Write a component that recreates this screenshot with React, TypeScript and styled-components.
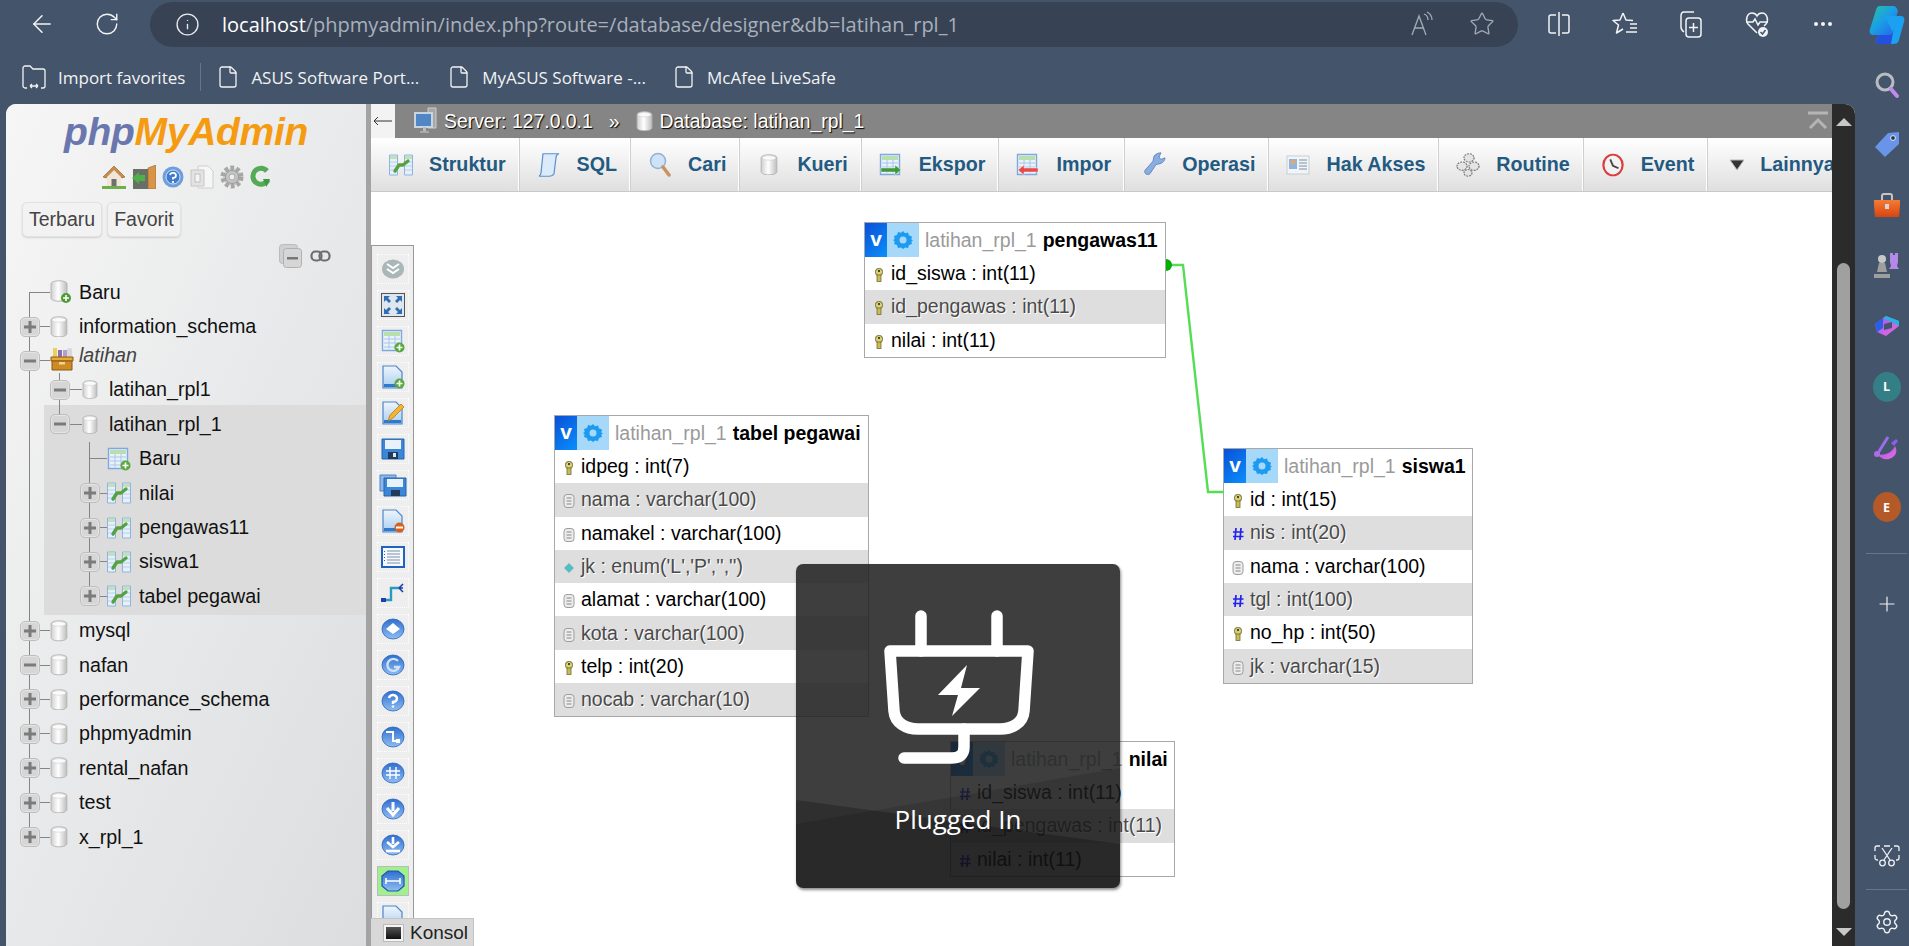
import type { ReactNode } from 'react';
import styled, { createGlobalStyle } from 'styled-components';
import { ArrowLeft, RotateCw, Info, Star, Ellipsis, File, Plus, Settings } from 'lucide-react';

const GlobalStyle = createGlobalStyle`
  html, body { margin: 0; padding: 0; overflow: hidden; }
  body { font-family: "Liberation Sans", Arial, sans-serif; }
  * { box-sizing: border-box; }
`;

const Page = styled.div`
  display: flex;
  width: 1909px;
  height: 946px;
  overflow: hidden;
  background: #44546a;
`;

const Browser = styled.div`
  display: flex;
  flex-direction: column;
  width: 1855px;
`;

/* ---------- browser toolbar ---------- */
const Toolbar = styled.div`
  display: flex;
  align-items: center;
  height: 50px;
  padding: 0 0 2px 26px;
  flex: none;
`;

const NavButton = styled.div<{ $gap?: number }>`
  display: flex;
  align-items: center;
  justify-content: center;
  width: 32px;
  height: 32px;
  flex: none;
  color: #f2f4f6;
  margin-right: ${(p) => p.$gap ?? 0}px;
`;

const AddressBar = styled.div`
  display: flex;
  align-items: center;
  width: 1368px;
  height: 45px;
  margin-right: 25px;
  padding: 0 21px 0 25px;
  border-radius: 23px;
  background: #374355;
  color: #e8eaed;
  flex: none;
`;

const Url = styled.div`
  margin-left: 22px;
  font-family: "Open Sans", sans-serif;
  font-size: 20px;
  color: #a9b0ba;
  white-space: nowrap;
  flex: 1;
`;

const UrlHost = styled.span`
  color: #ffffff;
`;

const PillAction = styled.div`
  display: flex;
  align-items: center;
  justify-content: center;
  width: 30px;
  margin-left: 30px;
  color: #a4abb5;
`;

/* ---------- favourites bar ---------- */
const FavBar = styled.div`
  display: flex;
  align-items: center;
  height: 54px;
  padding: 0 0 0 21px;
  flex: none;
  color: #f1f3f5;
`;

const FavItem = styled.div<{ $gap?: number }>`
  display: flex;
  align-items: center;
  gap: 11px;
  margin-right: ${(p) => p.$gap ?? 0}px;
  font-family: "Open Sans", sans-serif;
  font-size: 17px;
  white-space: nowrap;
`;

const FavDivider = styled.div`
  width: 1px;
  height: 28px;
  margin: 0 15px;
  background: #66758a;
`;

/* ---------- window ---------- */
const Window = styled.div`
  display: flex;
  flex: 1;
  margin-left: 6px;
  min-height: 0;
  overflow: hidden;
  border-radius: 10px 10px 0 0;
  background: #fff;
`;

const Sidebar = styled.div`
  display: flex;
  flex-direction: column;
  width: 360px;
  flex: none;
  padding-top: 8px;
  background: linear-gradient(115deg, #f6f6f6 0%, #e8e9ea 50%, #dcdddf 100%);
`;

const SideDivider = styled.div`
  width: 5px;
  flex: none;
  background: #a3a3a3;
`;

const Logo = styled.div`
  text-align: center;
  font-size: 39px;
  line-height: 40px;
  height: 40px;
  font-weight: 700;
  font-style: italic;
  letter-spacing: -0.3px;
  color: #f59b12;
`;

const LogoPhp = styled.span`
  color: #6a77ae;
`;

const QuickIcons = styled.div`
  display: flex;
  justify-content: center;
  align-items: center;
  gap: 6px;
  height: 24px;
  margin-top: 13px;
`;

const TabButtons = styled.div`
  display: flex;
  gap: 5px;
  height: 35px;
  margin-top: 13px;
  padding-left: 16px;
`;

const RecentButton = styled.div`
  display: flex;
  align-items: center;
  padding: 0 6px;
  border: 1px solid #e2e2e2;
  border-radius: 5px;
  background: #f2f2f2;
  box-shadow: 0 1px 2px #0002;
  font-size: 19.5px;
  color: #444;
`;

const TreeTools = styled.div`
  display: flex;
  align-items: center;
  gap: 8px;
  height: 24px;
  margin-top: 7px;
  padding-left: 273px;
`;

const Tree = styled.div`
  margin-top: 7px;
  padding-left: 9px;
`;

const lineColor = '#858585';
const verticalLine = (v: 'full' | 'top' | 'bottom') =>
  v === 'full'
    ? `linear-gradient(${lineColor},${lineColor}) 13.5px 0 / 1px 100% no-repeat`
    : v === 'top'
      ? `linear-gradient(${lineColor},${lineColor}) 13.5px 0 / 1px 50% no-repeat`
      : `linear-gradient(${lineColor},${lineColor}) 13.5px 100% / 1px 50% no-repeat`;

const Row = styled.div<{ $pull?: boolean }>`
  position: relative;
  z-index: 1;
  display: flex;
  align-items: stretch;
  height: 34.4px;
  margin-top: ${(p) => (p.$pull ? '-5.4px' : '0')};
`;

const Guide = styled.div<{ $on?: boolean }>`
  width: 30px;
  flex: none;
  background: ${(p) => (p.$on ? verticalLine('full') : 'none')};
`;

const Knot = styled.div<{ $v: 'full' | 'top' | 'bottom' }>`
  display: flex;
  align-items: center;
  justify-content: center;
  width: 30px;
  flex: none;
  background: ${(p) => verticalLine(p.$v)},
    linear-gradient(${lineColor},${lineColor}) 13.5px 50% / 17px 1px no-repeat;
`;

const Toggle = styled.div`
  display: flex;
  align-items: center;
  justify-content: center;
  width: 20px;
  height: 20px;
  border: 1px solid #bdbdbd;
  border-radius: 5px;
  background: #d6d6d6;
  box-shadow: inset 0 0 0 1px #e4e4e4;
`;

const IconSlot = styled.div<{ $pad: number }>`
  display: flex;
  align-items: center;
  width: 34px;
  flex: none;
  padding-left: ${(p) => p.$pad}px;
  background: linear-gradient(${lineColor},${lineColor}) 0 50% / ${(p) => p.$pad}px 1px no-repeat;
`;

const Label = styled.div<{ $italic?: boolean }>`
  display: flex;
  align-items: center;
  font-size: 19.7px;
  color: ${(p) => (p.$italic ? '#444' : '#111')};
  font-style: ${(p) => (p.$italic ? 'italic' : 'normal')};
  padding-bottom: ${(p) => (p.$italic ? '10px' : '0')};
  white-space: nowrap;
`;

const HighlightGroup = styled.div`
  position: relative;
  &::before {
    content: '';
    position: absolute;
    top: -2px;
    bottom: -1px;
    left: 29px;
    right: 0;
    background: #dcdcdc;
  }
`;

/* ---------- main column ---------- */
const Main = styled.div`
  display: flex;
  flex-direction: column;
  flex: 1;
  min-width: 0;
`;

const ServerBar = styled.div`
  display: flex;
  align-items: center;
  height: 34px;
  flex: none;
  background: #858585;
  color: #fff;
  font-size: 19.4px;
  text-shadow: 1px 1px 1px #000;
`;

const BackBox = styled.div`
  display: flex;
  align-items: center;
  justify-content: center;
  width: 24px;
  height: 34px;
  margin-right: 19px;
  background: #f3f3f3;
  color: #333;
`;

const Crumb = styled.div<{ $gap?: number }>`
  display: flex;
  align-items: center;
  gap: 7px;
  margin-right: ${(p) => p.$gap ?? 0}px;
  white-space: nowrap;
`;

const BarCollapse = styled.div`
  display: flex;
  margin-left: auto;
  margin-right: 3px;
`;

const Tabs = styled.div`
  display: flex;
  height: 54px;
  flex: none;
  overflow: hidden;
  background: linear-gradient(#ffffff, #dfdfdf);
  border-bottom: 1px solid #c9c9c9;
`;

const Tab = styled.div<{ $tight?: boolean }>`
  display: flex;
  align-items: center;
  gap: ${(p) => (p.$tight ? 11 : 16)}px;
  padding: 0 12px 0 18px;
  flex: none;
  border-right: 1px solid #fff;
  box-shadow: 1px 0 0 #cfcfcf inset;
  font-size: 19.7px;
  font-weight: 700;
  color: #235a81;
  white-space: nowrap;
  &:first-child { box-shadow: none; }
`;

const TabGlyph = styled.div`
  display: flex;
  justify-content: center;
  width: 24px;
`;

const Canvas = styled.div`
  position: relative;
  display: flex;
  flex: 1;
  min-height: 0;
  overflow: hidden;
  background: #fff;
`;

const SideMenu = styled.div`
  display: flex;
  flex-direction: column;
  gap: 6px;
  width: 43px;
  flex: none;
  margin-top: 53px;
  padding: 8px 0 0 5px;
  overflow: hidden;
  background: #eeeeee;
  border-top: 1px solid #999;
  border-right: 1px solid #999;
  border-left: 1px solid #999;
`;

const MenuButton = styled.div<{ $active?: boolean }>`
  display: flex;
  align-items: center;
  justify-content: center;
  width: 32px;
  height: 30px;
  flex: none;
  border: 1px ${(p) => (p.$active ? 'solid #bbb' : 'dotted #fff')};
  background: ${(p) => (p.$active ? '#a0f090' : 'transparent')};
`;

const Konsol = styled.div`
  position: absolute;
  left: 0;
  bottom: 0;
  display: flex;
  align-items: center;
  gap: 7px;
  width: 103px;
  height: 28px;
  padding-left: 13px;
  background: #d8d8d8;
  border-top: 1px solid #c4c4c4;
  border-right: 1px solid #c4c4c4;
  font-size: 19px;
  color: #222;
`;

const KonsolIcon = styled.div`
  width: 19px;
  height: 16px;
  background: linear-gradient(#555, #111);
  border: 2px solid #f4f4f4;
  outline: 1px solid #bbb;
`;

const RelationLines = styled.svg`
  position: absolute;
  inset: 0;
`;

const DbTable = styled.div<{ $x: number; $y: number; $w: number }>`
  position: absolute;
  left: ${(p) => p.$x}px;
  top: ${(p) => p.$y}px;
  width: ${(p) => p.$w}px;
  border: 1px solid #a8a8a8;
  background: #fff;
  font-size: 19.5px;
`;

const DbHeader = styled.div`
  display: flex;
  align-items: center;
  height: 34px;
  white-space: nowrap;
`;

const VBox = styled.div`
  display: flex;
  align-items: center;
  justify-content: center;
  width: 22px;
  height: 34px;
  background: linear-gradient(135deg, #0a50d8, #0b8ffa);
  color: #fff;
  font-weight: 700;
  font-size: 21px;
  padding-bottom: 2px;
`;

const GearBox = styled.div`
  display: flex;
  align-items: center;
  justify-content: center;
  width: 32px;
  height: 34px;
  background: #a6d8fa;
`;

const DbName = styled.div`
  margin-left: 6px;
  color: #9a9a9a;
`;

const DbTitle = styled.span`
  font-weight: 700;
  color: #000;
  margin-left: 6px;
`;

const DbRow = styled.div<{ $alt: boolean }>`
  display: flex;
  align-items: center;
  height: 33.3px;
  padding-left: 7px;
  background: ${(p) => (p.$alt ? '#dedede' : 'transparent')};
  color: ${(p) => (p.$alt ? '#4a4a4a' : '#000')};
  text-shadow: ${(p) => (p.$alt ? '1px 1px 0 #fff' : 'none')};
  white-space: nowrap;
`;

const DbGlyph = styled.div`
  display: flex;
  align-items: center;
  justify-content: center;
  width: 13px;
  margin-right: 6px;
  padding-top: 3px;
  flex: none;
`;

const Toast = styled.div`
  position: absolute;
  left: 425px;
  top: 372px;
  display: flex;
  flex-direction: column;
  align-items: center;
  width: 324px;
  height: 324px;
  overflow: hidden;
  border-radius: 7px;
  background: rgba(30, 30, 30, 0.86);
  box-shadow: 1px 2px 3px rgba(0, 0, 0, 0.45);
  color: #fff;
`;

const ToastShade = styled.svg`
  position: absolute;
  inset: 0;
`;

const PlugIcon = styled.svg`
  position: relative;
  margin-top: 40px;
`;

const ToastText = styled.div`
  position: relative;
  margin-top: 28px;
  font-family: "Open Sans", sans-serif;
  font-size: 26px;
  line-height: 34px;
`;

/* ---------- scrollbar ---------- */
const ScrollTrack = styled.div`
  display: flex;
  flex-direction: column;
  align-items: center;
  width: 23px;
  flex: none;
  padding: 14px 0 10px;
  background: #2b2b2b;
`;

const ScrollArrow = styled.div<{ $down?: boolean }>`
  width: 0;
  height: 0;
  flex: none;
  border-left: 8px solid transparent;
  border-right: 8px solid transparent;
  border-bottom: ${(p) => (p.$down ? '0' : '8px solid #c8c8c8')};
  border-top: ${(p) => (p.$down ? '8px solid #c8c8c8' : '0')};
  margin-top: ${(p) => (p.$down ? 'auto' : '0')};
`;

const ScrollThumb = styled.div`
  width: 13px;
  height: 646px;
  flex: none;
  margin-top: 137px;
  border-radius: 7px;
  background: #a0a0a0;
`;

/* ---------- right rail ---------- */
const Rail = styled.div`
  display: flex;
  flex-direction: column;
  width: 54px;
  flex: none;
  padding: 0 2px 4px 11px;
  color: #eef0f3;
`;

const RailSlot = styled.div<{ $h?: number; $gap?: number }>`
  display: flex;
  align-items: center;
  justify-content: center;
  width: 41px;
  height: ${(p) => p.$h ?? 60.3}px;
  margin-top: ${(p) => p.$gap ?? 0}px;
  flex: none;
`;

const RailDivider = styled.div<{ $gap: number }>`
  width: 41px;
  height: 1px;
  flex: none;
  margin-top: ${(p) => p.$gap}px;
  background: #66758a;
`;

const RailPush = styled.div`
  flex: 1;
`;

const Avatar = styled.div<{ $bg: string }>`
  display: flex;
  align-items: center;
  justify-content: center;
  width: 28px;
  height: 30px;
  border-radius: 50% / 50%;
  background: ${(p) => p.$bg};
  color: #fff;
  font-family: "Open Sans", sans-serif;
  font-weight: 700;
  font-size: 12.5px;
`;

const Defs = styled.svg`
  position: absolute;
  width: 0;
  height: 0;
`;

/* ---------- drawings ---------- */
const SharedDefs = () => (
  <Defs>
    <defs>
      <linearGradient id="cyl" x1="0" x2="1" y1="0" y2="0">
        <stop offset="0" stopColor="#cfcfcf" />
        <stop offset="0.45" stopColor="#ffffff" />
        <stop offset="1" stopColor="#bdbdbd" />
      </linearGradient>
      <linearGradient id="orb" x1="0" x2="0" y1="0" y2="1">
        <stop offset="0" stopColor="#2f6fd0" />
        <stop offset="1" stopColor="#8fbdf2" />
      </linearGradient>
      <linearGradient id="page" x1="0" x2="0" y1="0" y2="1">
        <stop offset="0" stopColor="#eef5fc" />
        <stop offset="1" stopColor="#a9cdf0" />
      </linearGradient>
      <linearGradient id="copilot" x1="0" x2="1" y1="0" y2="1">
        <stop offset="0" stopColor="#28c2a0" />
        <stop offset="0.5" stopColor="#1a9de8" />
        <stop offset="1" stopColor="#2a5ee8" />
      </linearGradient>
      <linearGradient id="toolbox" x1="0" x2="0" y1="0" y2="1">
        <stop offset="0" stopColor="#f47b35" />
        <stop offset="1" stopColor="#d9440f" />
      </linearGradient>
      <linearGradient id="magenta" x1="0" x2="1" y1="0" y2="1">
        <stop offset="0" stopColor="#8f5cf0" />
        <stop offset="1" stopColor="#ee6ae0" />
      </linearGradient>
    </defs>
  </Defs>
);

const DbIcon = ({ size = 18 }: { size?: number }) => (
  <svg width={size} height={size * 1.2} viewBox="0 0 18 22">
    <path d="M1 4c0-2 3.5-3.2 8-3.2S17 2 17 4v14c0 2-3.5 3.2-8 3.2S1 20 1 18z" fill="url(#cyl)" stroke="#b5b5b5" />
    <ellipse cx="9" cy="4" rx="7" ry="2.3" fill="#fbfbfb" stroke="#cfcfcf" strokeWidth="0.6" />
  </svg>
);

const NewDbIcon = () => (
  <svg width="22" height="24" viewBox="0 0 22 24">
    <path d="M1 4c0-2 3.5-3.2 8-3.2S17 2 17 4v14c0 2-3.5 3.2-8 3.2S1 20 1 18z" fill="url(#cyl)" stroke="#b5b5b5" />
    <circle cx="16" cy="18" r="5" fill="#4f9a36" />
    <path d="M16 15v6M13 18h6" stroke="#fff" strokeWidth="1.6" />
  </svg>
);

const BundleIcon = () => (
  <svg width="24" height="26" viewBox="0 0 24 26" style={{ marginTop: -4 }}>
    <rect x="3" y="2" width="4" height="9" fill="#e9d25a" />
    <rect x="8" y="4" width="4" height="8" fill="#8b6fb0" />
    <rect x="13" y="4" width="4" height="8" fill="#b49fcb" />
    <rect x="17" y="2" width="5" height="9" rx="2" fill="#d8d8d8" />
    <path d="M1 11h22v4H1z" fill="#e6a93c" stroke="#8a5a14" />
    <path d="M2 15h20v9H2z" fill="#cd8a25" stroke="#8a5a14" />
    <rect x="9" y="16" width="6" height="2.5" fill="#f3d58a" />
  </svg>
);

const TableIcon = () => (
  <svg width="24" height="22" viewBox="0 0 24 22">
    <path d="M0.5 1h8v20h-8z" fill="#e6f0fa" stroke="#8fb4e0" />
    <path d="M15.5 1h8v20h-8z" fill="#e6f0fa" stroke="#8fb4e0" />
    <path d="M1 2h7v3H1zM16 2h7v3h-7z" fill="#bfe3b4" />
    <path d="M1 8h7M1 12h7M1 16h7M16 8h7M16 12h7M16 16h7" stroke="#b9d0ec" />
    <path d="M6 17l4-6h4l5-4" fill="none" stroke="#54a244" strokeWidth="3.4" strokeLinecap="round" strokeLinejoin="round" />
  </svg>
);

const GridIcon = ({ badge }: { badge?: ReactNode }) => (
  <svg width="24" height="24" viewBox="0 0 24 24">
    <path d="M1.5 1.5h19v20h-19z" fill="#e9f2fb" stroke="#7fa8dc" strokeWidth="1.4" />
    <path d="M3 3h16v4H3z" fill="#b9dfae" />
    <path d="M3 10h16M3 14h16M3 18h16M8 7v13M14 7v13" stroke="#a9c6e8" />
    {badge}
  </svg>
);

const PlusBadge = () => (
  <>
    <circle cx="18.5" cy="18.5" r="5" fill="#58a83e" />
    <path d="M18.5 15.5v6M15.5 18.5h6" stroke="#fff" strokeWidth="1.7" />
  </>
);

const ArrowBadge = ({ color, left }: { color: string; left?: boolean }) => (
  <path
    d={left ? 'M2 17l6-5v3h14v4H8v3z' : 'M22 17l-6-5v3H2v4h14v3z'}
    fill={color}
    stroke="#fff"
    strokeWidth="0.4"
  />
);

const Minus = () => <svg width="12" height="4" viewBox="0 0 12 4"><rect width="12" height="3" y="0.5" fill="#7b7b7b" /></svg>;
const PlusMark = () => (
  <svg width="12" height="12" viewBox="0 0 12 12"><path d="M0 6h12M6 0v12" stroke="#7b7b7b" strokeWidth="3" /></svg>
);

const KeyGlyph = () => (
  <svg width="10" height="14" viewBox="0 0 10 14">
    <rect x="1.5" y="0.5" width="7" height="7" rx="3" fill="#d8cf72" stroke="#6f6a3a" />
    <rect x="3" y="7" width="4" height="6.5" fill="#c9bd52" stroke="#6f6a3a" strokeWidth="0.8" />
    <rect x="4" y="2" width="2" height="2" fill="#4a4a2a" />
  </svg>
);

const TextGlyph = () => (
  <svg width="12" height="14" viewBox="0 0 12 14">
    <rect x="1" y="0.5" width="10" height="13" rx="3" fill="#ececec" stroke="#9c9c9c" />
    <path d="M3.5 4h5M3.5 7h5M3.5 10h5" stroke="#8a8a8a" />
  </svg>
);

const EnumGlyph = () => (
  <svg width="12" height="12" viewBox="0 0 12 12">
    <path d="M6 1l5 5-5 5-5-5z" fill="#4fc0c8" stroke="#b4c6c8" />
  </svg>
);

const HashGlyph = ({ color = '#2222ee' }: { color?: string }) => (
  <svg width="12" height="14" viewBox="0 0 12 14">
    <path d="M4 1L3 13M9 1L8 13M1 5h10.500M1 9.500h10.500" stroke={color} strokeWidth="1.7" />
  </svg>
);

const GearMini = () => (
  <svg width="20" height="20" viewBox="0 0 20 20">
    <path d="M10 1l2 2.300 3-.7 1 3 3 1-.7 3 1.700 1-1.700 1 .7 2.500-3 1-1 3-3-.7L10 19l-2-1.600-3 .7-1-3-3-1 .7-2.500L0 10l1.700-1-.7-3 3-1 1-3 3 .7z" fill="#1c9bf0" />
    <circle cx="10" cy="10" r="3.500" fill="#a6d8fa" />
  </svg>
);

const Orb = ({ children }: { children?: ReactNode }) => (
  <svg width="24" height="22" viewBox="0 0 24 22">
    <ellipse cx="12" cy="11" rx="11" ry="10" fill="url(#orb)" stroke="#2a62b8" strokeWidth="0.8" />
    {children}
  </svg>
);

const PageIcon = ({ children }: { children?: ReactNode }) => (
  <svg width="24" height="24" viewBox="0 0 24 24">
    <path d="M2 1h13l6 6v16H2z" fill="url(#page)" stroke="#4d86c8" strokeWidth="1.2" />
    <path d="M3 19h17v3H3z" fill="#2f79cc" />
    {children}
  </svg>
);

const FloppyIcon = () => (
  <svg width="24" height="22" viewBox="0 0 24 22">
    <path d="M1 1h22v20H1z" fill="#3a86d8" stroke="#2a62a8" />
    <path d="M4 2h16v9H4z" fill="#e9f2fb" />
    <path d="M7 14h10v7H7z" fill="#203a5c" />
    <rect x="12" y="15" width="3" height="4" fill="#dfe7f0" />
  </svg>
);

const menuIcons: ReactNode[] = [
  <svg width="24" height="20" viewBox="0 0 24 20" key="collapse">
    <ellipse cx="12" cy="10" rx="11" ry="9.500" fill="#a9b7b9" />
    <path d="M6 5l6 4 6-4M6 10l6 4 6-4" fill="none" stroke="#fff" strokeWidth="2" />
  </svg>,
  <svg width="24" height="24" viewBox="0 0 24 24" key="fullscreen">
    <rect x="0.500" y="0.500" width="23" height="23" fill="#dfe6ee" stroke="#555" />
    <path d="M3 3h6l-2 2 3 3-2 2-3-3-2 2zM21 3v6l-2-2-3 3-2-2 3-3-2-2zM3 21v-6l2 2 3-3 2 2-3 3 2 2zM21 21h-6l2-2-3-3 2-2 3 3 2-2z" fill="#2f6db5" />
  </svg>,
  <GridIcon key="newtable" badge={<PlusBadge />} />,
  <PageIcon key="newpage"><PlusBadge /></PageIcon>,
  <PageIcon key="editpage">
    <path d="M7 20l2-6L20 3l3 3-11 11z" fill="#f2b632" stroke="#b87a16" strokeWidth="0.8" />
  </PageIcon>,
  <FloppyIcon key="save" />,
  <svg width="28" height="24" viewBox="0 0 28 24" key="saveas">
    <path d="M1 2h16v16H1z" fill="#8ab8ea" stroke="#4d86c8" />
    <path d="M5 5h22v18H5z" fill="#3a86d8" stroke="#2a62a8" />
    <path d="M8 6h16v8H8z" fill="#e9f2fb" />
    <path d="M12 17h9v6h-9z" fill="#203a5c" />
  </svg>,
  <PageIcon key="delpage">
    <circle cx="18.500" cy="18.500" r="5" fill="#d9601c" />
    <rect x="15" y="17.500" width="7" height="2" fill="#fff" />
  </PageIcon>,
  <svg width="24" height="22" viewBox="0 0 24 22" key="list">
    <rect x="1" y="1" width="22" height="20" fill="#f6f9fd" stroke="#1f63bf" strokeWidth="2" />
    <path d="M6 5h13M6 8h13M6 11h13M6 14h13M6 17h13" stroke="#7c8ea6" />
    <path d="M3.500 5v12" stroke="#1f63bf" strokeDasharray="1 2" />
  </svg>,
  <svg width="24" height="22" viewBox="0 0 24 22" key="relation">
    <path d="M3 18h7V6h8" fill="none" stroke="#2a9bbf" strokeWidth="2.400" />
    <rect x="0" y="16" width="5" height="4" fill="#1c3faa" />
    <path d="M18 6l4-4M18 6l4 0M18 6l4 4" stroke="#1c3faa" strokeWidth="1.600" />
  </svg>,
  <Orb key="o1"><path d="M5 11l7-6 7 6-7 5z" fill="#fff" /></Orb>,
  <Orb key="o2"><path d="M17 7a6 6 0 1 0 1 6h-5" fill="none" stroke="#cfe2f8" strokeWidth="2.400" /></Orb>,
  <Orb key="o3"><path d="M8 8a4 3.500 0 1 1 4 4v2M12 15.500v2" fill="none" stroke="#fff" strokeWidth="2.400" /></Orb>,
  <Orb key="o4"><path d="M5 6h7v9h7" fill="none" stroke="#fff" strokeWidth="2" /><rect x="15" y="13" width="4" height="4" fill="#fff" /></Orb>,
  <Orb key="o5"><path d="M9 5v12M15 5v12M5 9h14M5 13h14" stroke="#fff" strokeWidth="1.400" /></Orb>,
  <Orb key="o6"><path d="M12 4v9M6 10l6 7 6-7" fill="none" stroke="#fff" strokeWidth="3" /></Orb>,
  <Orb key="o7"><path d="M12 3v7M6 8l6 5 6-5M5 17h14" fill="none" stroke="#fff" strokeWidth="2.600" /></Orb>,
  <svg width="24" height="22" viewBox="0 0 24 22" key="o8">
    <path d="M7 1h10l6 5v10l-6 5H7l-6-5V6z" fill="url(#orb)" stroke="#1d56aa" strokeWidth="1.200" />
    <path d="M5 11h14M5 8v6M19 8v6" stroke="#fff" strokeWidth="1.600" />
  </svg>,
  <PageIcon key="last" />,
];

type TreeItem = {
  label: string;
  depth: 0 | 1 | 2;
  line: 'full' | 'top' | 'bottom';
  toggle?: 'plus' | 'minus';
  icon: ReactNode;
  italic?: boolean;
  pull?: boolean;
};

const beforeGroup: TreeItem[] = [
  { label: 'Baru', depth: 0, line: 'bottom', icon: <NewDbIcon /> },
  { label: 'information_schema', depth: 0, line: 'full', toggle: 'plus', icon: <DbIcon /> },
  { label: 'latihan', depth: 0, line: 'full', toggle: 'minus', icon: <BundleIcon />, italic: true },
  { label: 'latihan_rpl1', depth: 1, line: 'full', toggle: 'minus', icon: <DbIcon size={16} />, pull: true },
];

const group: TreeItem[] = [
  { label: 'latihan_rpl_1', depth: 1, line: 'top', toggle: 'minus', icon: <DbIcon size={16} /> },
  { label: 'Baru', depth: 2, line: 'full', icon: <GridIcon badge={<PlusBadge />} /> },
  { label: 'nilai', depth: 2, line: 'full', toggle: 'plus', icon: <TableIcon /> },
  { label: 'pengawas11', depth: 2, line: 'full', toggle: 'plus', icon: <TableIcon /> },
  { label: 'siswa1', depth: 2, line: 'full', toggle: 'plus', icon: <TableIcon /> },
  { label: 'tabel pegawai', depth: 2, line: 'top', toggle: 'plus', icon: <TableIcon /> },
];

const afterGroup: TreeItem[] = [
  { label: 'mysql', depth: 0, line: 'full', toggle: 'plus', icon: <DbIcon /> },
  { label: 'nafan', depth: 0, line: 'full', toggle: 'minus', icon: <DbIcon /> },
  { label: 'performance_schema', depth: 0, line: 'full', toggle: 'plus', icon: <DbIcon /> },
  { label: 'phpmyadmin', depth: 0, line: 'full', toggle: 'plus', icon: <DbIcon /> },
  { label: 'rental_nafan', depth: 0, line: 'full', toggle: 'plus', icon: <DbIcon /> },
  { label: 'test', depth: 0, line: 'full', toggle: 'plus', icon: <DbIcon /> },
  { label: 'x_rpl_1', depth: 0, line: 'top', toggle: 'plus', icon: <DbIcon /> },
];

const iconPad = [5, 7, 2];

const TreeRow = ({ item }: { item: TreeItem }) => (
  <Row $pull={item.pull}>
    {item.depth > 0 && <Guide $on />}
    {item.depth > 1 && <Guide />}
    <Knot $v={item.line}>
      {item.toggle && <Toggle>{item.toggle === 'plus' ? <PlusMark /> : <Minus />}</Toggle>}
    </Knot>
    <IconSlot $pad={iconPad[item.depth]}>{item.icon}</IconSlot>
    <Label $italic={item.italic}>{item.label}</Label>
  </Row>
);

type Field = [string, 'key' | 'text' | 'enum' | 'hash'];

const FieldGlyph = ({ kind }: { kind: Field[1] }) => {
  if (kind === 'key') return <KeyGlyph />;
  if (kind === 'enum') return <EnumGlyph />;
  if (kind === 'hash') return <HashGlyph />;
  return <TextGlyph />;
};

const designerTables: { name: string; x: number; y: number; w: number; fields: Field[] }[] = [
  {
    name: 'pengawas11', x: 493, y: 30, w: 302,
    fields: [['id_siswa : int(11)', 'key'], ['id_pengawas : int(11)', 'key'], ['nilai : int(11)', 'key']],
  },
  {
    name: 'tabel pegawai', x: 183, y: 223, w: 315,
    fields: [
      ['idpeg : int(7)', 'key'], ['nama : varchar(100)', 'text'], ['namakel : varchar(100)', 'text'],
      ["jk : enum('L','P','','')", 'enum'], ['alamat : varchar(100)', 'text'], ['kota : varchar(100)', 'text'],
      ['telp : int(20)', 'key'], ['nocab : varchar(10)', 'text'],
    ],
  },
  {
    name: 'siswa1', x: 852, y: 256, w: 250,
    fields: [
      ['id : int(15)', 'key'], ['nis : int(20)', 'hash'], ['nama : varchar(100)', 'text'],
      ['tgl : int(100)', 'hash'], ['no_hp : int(50)', 'key'], ['jk : varchar(15)', 'text'],
    ],
  },
  {
    name: 'nilai', x: 579, y: 549, w: 225,
    fields: [['id_siswa : int(11)', 'hash'], ['id_pengawas : int(11)', 'hash'], ['nilai : int(11)', 'hash']],
  },
];

const tabItems: { label: string; icon: ReactNode }[] = [
  { label: 'Struktur', icon: <TableIcon /> },
  {
    label: 'SQL',
    icon: (
      <svg width="24" height="25" viewBox="0 0 24 30" preserveAspectRatio="none">
        <path d="M6 2h16c-2 1-3 3-3 5l-2 19c-1 2-3 3-5 3H2c2-1 2-3 2-4z" fill="#dcebfa" stroke="#5b8fd0" strokeWidth="1.200" />
      </svg>
    ),
  },
  {
    label: 'Cari',
    icon: (
      <svg width="22" height="26" viewBox="0 0 22 26">
        <circle cx="9" cy="9" r="7.500" fill="#cfe2f6" stroke="#8fb3d8" strokeWidth="1.500" />
        <path d="M14 15l6 8" stroke="#c8935c" strokeWidth="3.500" strokeLinecap="round" />
      </svg>
    ),
  },
  { label: 'Kueri', icon: <DbIcon size={18} /> },
  { label: 'Ekspor', icon: <GridIcon badge={<ArrowBadge color="#3f9a3a" />} /> },
  { label: 'Impor', icon: <GridIcon badge={<ArrowBadge color="#e84a4a" left />} /> },
  {
    label: 'Operasi',
    icon: (
      <svg width="24" height="25" viewBox="0 0 24 30" preserveAspectRatio="none">
        <path d="M5 27c-2-1-3-3-2-5l8-11 1-6c1-2 4-4 7-4l-2 5 2 3 4-2c0 3-2 6-5 7l-4 1-6 11c-1 1-2 1-3 1z" fill="#8aaee0" stroke="#5f86c2" />
      </svg>
    ),
  },
  {
    label: 'Hak Akses',
    icon: (
      <svg width="24" height="22" viewBox="0 0 24 22">
        <rect x="1" y="2" width="22" height="18" fill="#f2f5f8" stroke="#c9cfd6" />
        <rect x="3" y="5" width="8" height="10" fill="#8ab6e4" />
        <circle cx="7" cy="8.500" r="2.500" fill="#e0a878" />
        <path d="M13 6h8M13 9h8M13 12h8M13 15h8" stroke="#7d8ea3" />
      </svg>
    ),
  },
  {
    label: 'Routine',
    icon: (
      <svg width="24" height="25" viewBox="0 0 24 30" preserveAspectRatio="none" fill="#e4e4e4" stroke="#777" strokeWidth="1.300">
        <circle cx="13" cy="7" r="5" strokeDasharray="2 1" />
        <circle cx="6" cy="17" r="5" strokeDasharray="2 1" />
        <circle cx="18" cy="17" r="5" strokeDasharray="2 1" />
        <circle cx="12" cy="25" r="4" strokeDasharray="2 1" />
      </svg>
    ),
  },
  {
    label: 'Event',
    icon: (
      <svg width="22" height="24" viewBox="0 0 24 30" preserveAspectRatio="none">
        <ellipse cx="12" cy="15" rx="10.500" ry="13" fill="#f2f2f2" stroke="#dd3a3a" strokeWidth="2.400" />
        <path d="M9 8l3 8 6 3" fill="none" stroke="#444" strokeWidth="2" />
      </svg>
    ),
  },
  {
    label: 'Lainnya',
    icon: (
      <svg width="16" height="12" viewBox="0 0 16 12">
        <path d="M1 1h14L8 11z" fill="#333" stroke="#bbb" />
      </svg>
    ),
  },
];

const ReadAloud = () => (
  <svg width="26" height="26" viewBox="0 0 26 26" fill="none" stroke="currentColor" strokeWidth="1.300">
    <path d="M3 24L10 5l7 19M5.500 17h9" />
    <path d="M15 3c3 1 4 3 4 6M18 1c4 2 5 5 5 8" />
  </svg>
);

const SplitView = () => (
  <svg width="24" height="26" viewBox="0 0 24 26" fill="none" stroke="currentColor" strokeWidth="1.500">
    <path d="M12 1v24" />
    <path d="M9 4H4c-1 0-2 1-2 2v14c0 1 1 2 2 2h5M15 4h5c1 0 2 1 2 2v14c0 1-1 2-2 2h-5" />
  </svg>
);

const FavStar = () => (
  <svg width="26" height="26" viewBox="0 0 26 26" fill="none" stroke="currentColor" strokeWidth="1.500" strokeLinejoin="round">
    <path d="M11 2l3 7 7 .5M11 2L8 9l-7 .5 5.500 4.500L4.500 22 11 18M18 13h7M18 17h7M14 21h11" />
  </svg>
);

const Collections = () => (
  <svg width="26" height="28" viewBox="0 0 26 28" fill="none" stroke="currentColor" strokeWidth="1.500">
    <path d="M16 2H6C4 2 3 4 3 6v11c0 1 0 3 3 5" />
    <rect x="8" y="8" width="15" height="19" rx="3" />
    <path d="M15.500 13v9M11 17.500h9" />
  </svg>
);

const HealthHeart = () => (
  <svg width="26" height="28" viewBox="0 0 26 28" fill="none" stroke="currentColor" strokeWidth="1.500">
    <path d="M13 23L4 14C1 10 3 3 8 3c2 0 4 1 5 3 1-2 3-3 5-3 5 0 7 7 4 11l-2 2" />
    <path d="M2 12h7l2-3 3 6 2-3h8" />
    <circle cx="19" cy="22" r="5" fill="#f0f2f5" stroke="none" />
    <path d="M16.500 22l2 2 3-4" stroke="#44546a" />
  </svg>
);

const FavImport = () => (
  <svg width="26" height="26" viewBox="0 0 26 26" fill="none" stroke="currentColor" strokeWidth="1.300">
    <path d="M6 24H4c-1 0-2-1-2-2V4c0-1 1-2 2-2h5l3 3h10c1 0 2 1 2 2v15c0 1-1 2-2 2h-2" />
    <path d="M9 22h8M9 22l2-2M9 22l2 2M17 22l-2-2M17 22l-2 2" />
  </svg>
);

const CopilotLogo = () => (
  <svg width="36" height="42" viewBox="0 0 36 42">
    <path d="M10 2h14c3 0 4 2 5 5l-6 20c-1 3-3 4-6 4H4c-3 0-4-3-3-6L7 6c.5-2 2-4 3-4z" fill="url(#copilot)" />
    <path d="M16 12h16c3 0 4 3 3 6l-5 18c-1 3-3 4-6 4H10c-3 0-4-2-3-4l3-5h7c3 0 5-1 6-4z" fill="#1ca0f0" />
    <path d="M10 31h8c3 0 5-1 6-4l1-4-3 17H10c-3 0-4-2-3-4z" fill="#2450e0" />
  </svg>
);

const RailSearch = () => (
  <svg width="26" height="28" viewBox="0 0 26 28" fill="none">
    <circle cx="11" cy="11" r="8" stroke="#b9bcc0" strokeWidth="3" />
    <path d="M17 18l6 7" stroke="#c08bea" strokeWidth="4" strokeLinecap="round" />
  </svg>
);

const RailTag = () => (
  <svg width="26" height="28" viewBox="0 0 26 28">
    <path d="M25 1v12L11 26 1 16 14 2z" fill="#6a94ea" />
    <circle cx="19" cy="7" r="2.400" fill="#26324a" stroke="#e8eefc" />
  </svg>
);

const RailToolbox = () => (
  <svg width="28" height="26" viewBox="0 0 28 26">
    <path d="M9 7V3c0-1 1-2 2-2h6c1 0 2 1 2 2v4" fill="none" stroke="#c6c6c6" strokeWidth="2" />
    <path d="M1 7h26v5l-1 12H2L1 12z" fill="url(#toolbox)" />
    <rect x="12" y="11" width="4" height="5" fill="#d6d6d6" />
  </svg>
);

const RailChess = () => (
  <svg width="28" height="28" viewBox="0 0 28 28">
    <circle cx="9" cy="7" r="4" fill="#c8c8c8" />
    <path d="M6 11h6l2 9H4zM1 22h16v4H1z" fill="#9e9e9e" />
    <path d="M17 1h3v2h2V1h3v9l-1 4 2 3H16l2-3-1-4z" fill="#b48ae8" />
  </svg>
);

const RailOffice = () => (
  <svg width="26" height="24" viewBox="0 0 26 24">
    <path d="M1 10L12 2l13 5v5L12 22 3 18z" fill="url(#magenta)" />
    <path d="M1 10L9 4v10l-6 4z" fill="#2a5ee8" />
    <path d="M9 4l3-2 13 5v5l-7-4z" fill="#25b6e0" />
    <path d="M10 10l8-2v6l-8 2z" fill="#44546a" />
  </svg>
);

const RailBrush = () => (
  <svg width="28" height="26" viewBox="0 0 28 26">
    <path d="M4 20c6 2 14 0 18-8 3 5 1 11-6 13-5 1-9-1-12-5z" fill="url(#magenta)" />
    <path d="M5 19L15 3" stroke="#9b6ce8" strokeWidth="3" />
    <circle cx="4" cy="20" r="3" fill="#b06ce8" />
    <path d="M18 9l5-4 2 2-4 5z" fill="#8f5cf0" />
  </svg>
);

const RailSnip = () => (
  <svg width="26" height="24" viewBox="0 0 26 24" fill="none" stroke="currentColor" strokeWidth="1.300">
    <path d="M1 8V5c0-1 1-2 2-2h3M10 3h6M20 3h3c1 0 2 1 2 2v3M25 12v3c0 1-1 2-2 2h-1M4 17H3c-1 0-2-1-2-2v-3" />
    <path d="M8 5l8 12M18 5L10 17" />
    <circle cx="8.500" cy="20" r="2.800" />
    <circle cx="17.500" cy="20" r="2.800" />
  </svg>
);

export default function App() {
  return (
    <Page>
      <GlobalStyle />
      <SharedDefs />
      <Browser>
        <Toolbar>
          <NavButton $gap={33}><ArrowLeft size={28} strokeWidth={1.3} /></NavButton>
          <NavButton $gap={27}><RotateCw size={26} strokeWidth={1.3} /></NavButton>
          <AddressBar>
            <Info size={25} strokeWidth={1.3} />
            <Url>
              <UrlHost>localhost</UrlHost>/phpmyadmin/index.php?route=/database/designer&amp;db=latihan_rpl_1
            </Url>
            <PillAction><ReadAloud /></PillAction>
            <PillAction><Star size={26} strokeWidth={1.2} /></PillAction>
          </AddressBar>
          <NavButton $gap={34}><SplitView /></NavButton>
          <NavButton $gap={34}><FavStar /></NavButton>
          <NavButton $gap={34}><Collections /></NavButton>
          <NavButton $gap={34}><HealthHeart /></NavButton>
          <NavButton><Ellipsis size={24} strokeWidth={2} /></NavButton>
        </Toolbar>

        <FavBar>
          <FavItem><FavImport /> Import favorites</FavItem>
          <FavDivider />
          <FavItem $gap={28}><File size={24} strokeWidth={1.3} /> ASUS Software Port...</FavItem>
          <FavItem $gap={26}><File size={24} strokeWidth={1.3} /> MyASUS Software -...</FavItem>
          <FavItem><File size={24} strokeWidth={1.3} /> McAfee LiveSafe</FavItem>
        </FavBar>

        <Window>
          <Sidebar>
            <Logo><LogoPhp>php</LogoPhp>MyAdmin</Logo>
            <QuickIcons>
              <svg width="24" height="24" viewBox="0 0 24 24">
                <path d="M1 12L12 1l11 11-3 1-8-8-8 8z" fill="#c98a4a" stroke="#8d5a28" strokeWidth="0.600" />
                <path d="M5 12l7-7 7 7v9H5z" fill="#f0e7d6" />
                <rect x="9.500" y="14" width="5" height="7" fill="#6f6f6f" />
                <path d="M0 21h24v3H0z" fill="#6fae4c" />
              </svg>
              <svg width="24" height="24" viewBox="0 0 24 24">
                <rect x="1" y="4" width="16" height="20" fill="#686f66" />
                <path d="M16 3l8-3v24h-8z" fill="#d8954a" stroke="#9b6127" strokeWidth="0.600" />
                <path d="M0 13l7-6v3h6v6H7v3z" fill="#4fb04a" />
              </svg>
              <svg width="22" height="22" viewBox="0 0 22 22">
                <circle cx="11" cy="11" r="10.500" fill="#6d9fdc" />
                <circle cx="11" cy="11" r="7" fill="#3f7ccc" stroke="#cfe1f6" />
                <path d="M8 9a3 2.600 0 1 1 3 3v1.500M11 15v2" fill="none" stroke="#fff" strokeWidth="1.800" />
              </svg>
              <svg width="24" height="24" viewBox="0 0 24 24">
                <path d="M8 1h10l5 5v17H8z" fill="#f6f6f6" stroke="#cfcfcf" />
                <path d="M1 5h13v16H1z" fill="#e3e3e3" stroke="#c6c6c6" />
                <rect x="5" y="9" width="5" height="8" fill="#f5f5f5" stroke="#c0c0c0" />
              </svg>
              <svg width="24" height="24" viewBox="0 0 24 24">
                <circle cx="12" cy="12" r="9" fill="#c9c9c9" stroke="#a6a6a6" strokeWidth="5" strokeDasharray="3.500 2.300" />
                <circle cx="12" cy="12" r="6.500" fill="#c4c4c4" stroke="#9c9c9c" />
                <circle cx="12" cy="12" r="3" fill="#eee" stroke="#aaa" />
              </svg>
              <svg width="20" height="24" viewBox="0 0 20 24">
                <path d="M17 6a8 8 0 1 0 1 9" fill="none" stroke="#55ab55" strokeWidth="5" />
                <path d="M13 14h7l-3.500 8z" fill="#3f9a45" />
              </svg>
            </QuickIcons>
            <TabButtons>
              <RecentButton>Terbaru</RecentButton>
              <RecentButton>Favorit</RecentButton>
            </TabButtons>
            <TreeTools>
              <svg width="23" height="24" viewBox="0 0 23 24">
                <rect x="0.500" y="0.500" width="18" height="19" rx="3" fill="#d0d0d0" stroke="#bbb" />
                <rect x="4.500" y="4.500" width="18" height="19" rx="3" fill="#d6d6d6" stroke="#b0b0b0" />
                <rect x="8" y="13" width="11" height="2.500" fill="#777" />
              </svg>
              <svg width="21" height="12" viewBox="0 0 21 12" fill="none" stroke="#6e6e6e" strokeWidth="2.200">
                <rect x="1.500" y="1.500" width="10" height="9" rx="4" />
                <rect x="9.500" y="1.500" width="10" height="9" rx="4" />
              </svg>
            </TreeTools>
            <Tree>
              {beforeGroup.map((item) => <TreeRow key={item.label} item={item} />)}
              <HighlightGroup>
                {group.map((item) => <TreeRow key={item.label} item={item} />)}
              </HighlightGroup>
              {afterGroup.map((item) => <TreeRow key={item.label} item={item} />)}
            </Tree>
          </Sidebar>
          <SideDivider />

          <Main>
            <ServerBar>
              <BackBox>
                <svg width="20" height="10" viewBox="0 0 20 10" fill="none" stroke="#333">
                  <path d="M1 5h18M5 1L1 5l4 4" />
                </svg>
              </BackBox>
              <Crumb $gap={16}>
                <svg width="23" height="28" viewBox="0 0 23 28">
                  <path d="M14 1h8v20h-8z" fill="#a7a7a7" stroke="#ccc" />
                  <rect x="1" y="6" width="17" height="14" fill="#4f86c6" stroke="#c9d4de" strokeWidth="2" />
                  <path d="M6 24h9v2H6z" fill="#aaa" />
                  <path d="M9 20h3v4H9z" fill="#bbb" />
                </svg>
                Server: 127.0.0.1
              </Crumb>
              <Crumb $gap={16}>»</Crumb>
              <Crumb>
                <DbIcon size={17} />
                Database: latihan_rpl_1
              </Crumb>
              <BarCollapse>
                <svg width="22" height="20" viewBox="0 0 22 20" fill="none" stroke="#b5b5b5" strokeWidth="3">
                  <path d="M1 2h20M3 17l8-8 8 8" />
                </svg>
              </BarCollapse>
            </ServerBar>

            <Tabs>
              {tabItems.map((t) => (
                <Tab key={t.label} $tight={t.label === 'Lainnya'}>
                  <TabGlyph>{t.icon}</TabGlyph>
                  {t.label}
                </Tab>
              ))}
            </Tabs>

            <Canvas>
              <SideMenu>
                {menuIcons.map((icon, i) => (
                  <MenuButton key={i} $active={i === 17}>{icon}</MenuButton>
                ))}
              </SideMenu>

              {designerTables.map((t) => (
                <DbTable key={t.name} $x={t.x} $y={t.y} $w={t.w}>
                  <DbHeader>
                    <VBox>v</VBox>
                    <GearBox><GearMini /></GearBox>
                    <DbName>latihan_rpl_1<DbTitle>{t.name}</DbTitle></DbName>
                  </DbHeader>
                  {t.fields.map(([text, kind], i) => (
                    <DbRow key={text} $alt={i % 2 === 1}>
                      <DbGlyph><FieldGlyph kind={kind} /></DbGlyph>
                      {text}
                    </DbRow>
                  ))}
                </DbTable>
              ))}

              <RelationLines width="1460" height="754" viewBox="371 192 1460 754">
                <path d="M1166 265h17l25 227h16" fill="none" stroke="#55dd55" strokeWidth="2.400" />
                <path d="M1166 259a6 6 0 0 1 0 12z" fill="#00b000" />
              </RelationLines>

              <Konsol><KonsolIcon /> Konsol</Konsol>

              <Toast>
                <ToastShade width="324" height="324" viewBox="0 0 324 324">
                  <path d="M0 260L324 204V324H0z" fill="rgba(0,0,0,0.12)" />
                  <path d="M0 236L324 280V324H0z" fill="rgba(0,0,0,0.24)" />
                </ToastShade>
                <PlugIcon width="160" height="170" viewBox="82 40 160 170" fill="none" stroke="#fff" strokeWidth="11.500" strokeLinecap="round" strokeLinejoin="round">
                  <path d="M125 52V87M201 52V87" />
                  <path d="M94 87h138l-4 60c-1 12-12 18-24 18H122c-12 0-23-6-24-18z" />
                  <path d="M168 165v18c0 8-5 11-12 11h-48" />
                  <path d="M171 101l-29 30h20l-6 21 28-28h-19z" fill="#fff" stroke="none" />
                </PlugIcon>
                <ToastText>Plugged In</ToastText>
              </Toast>
            </Canvas>
          </Main>

          <ScrollTrack>
            <ScrollArrow />
            <ScrollThumb />
            <ScrollArrow $down />
          </ScrollTrack>
        </Window>
      </Browser>

      <Rail>
        <RailSlot $h={50}><CopilotLogo /></RailSlot>
        <RailSlot $gap={5}><RailSearch /></RailSlot>
        <RailSlot><RailTag /></RailSlot>
        <RailSlot><RailToolbox /></RailSlot>
        <RailSlot><RailChess /></RailSlot>
        <RailSlot><RailOffice /></RailSlot>
        <RailSlot><Avatar $bg="#347f86">L</Avatar></RailSlot>
        <RailSlot><RailBrush /></RailSlot>
        <RailSlot><Avatar $bg="#b45a28">E</Avatar></RailSlot>
        <RailDivider $gap={16} />
        <RailSlot $gap={19}><Plus size={24} strokeWidth={1.2} /></RailSlot>
        <RailPush />
        <RailSlot $h={40}><RailSnip /></RailSlot>
        <RailDivider $gap={14} />
        <RailSlot $h={40} $gap={12}><Settings size={26} strokeWidth={1.3} /></RailSlot>
      </Rail>
    </Page>
  );
}
